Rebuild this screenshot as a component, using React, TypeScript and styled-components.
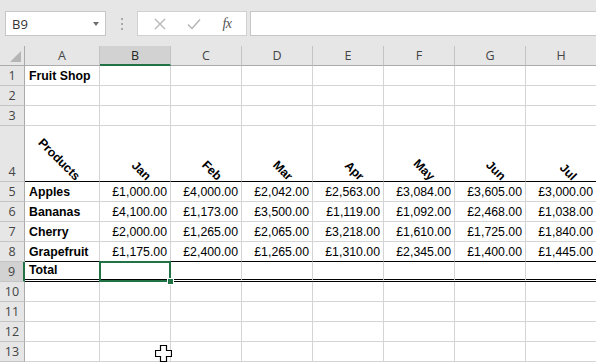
import styled, { createGlobalStyle } from "styled-components";

const GlobalStyle = createGlobalStyle`
  html, body {
    margin: 0;
    padding: 0;
    background: #ffffff;
    overflow: hidden;
  }
`;

const GREEN = "#217346";
const GRID = "#d4d4d4";

const Window = styled.div`
  width: 596px;
  height: 362px;
  overflow: hidden;
  position: relative;
  display: flex;
  flex-direction: column;
  background: #e6e6e6;
  font-family: "Liberation Sans", Arial, sans-serif;
`;

const FormulaBar = styled.div`
  height: 46px;
  box-sizing: border-box;
  padding: 11px 0 0 5px;
  display: flex;
  align-items: flex-start;
  background: #e6e6e6;
`;

const NameBox = styled.div`
  width: 101px;
  height: 25px;
  box-sizing: border-box;
  background: #ffffff;
  border: 1px solid #c6c6c6;
  display: flex;
  align-items: center;
  justify-content: space-between;
  padding: 0 6px 0 6px;
  font-family: "Open Sans", "Noto Sans", sans-serif;
  font-size: 13px;
  color: #333;
`;

const Dropdown = styled.span`
  width: 0;
  height: 0;
  border-left: 3.5px solid transparent;
  border-right: 3.5px solid transparent;
  border-top: 4px solid #6d6d6d;
`;

const Grip = styled.div`
  width: 31px;
  height: 25px;
  display: flex;
  flex-direction: column;
  align-items: center;
  justify-content: center;
  gap: 3px;
  span {
    width: 2px;
    height: 2px;
    background: #a8a8a8;
  }
`;

const ButtonBox = styled.div`
  width: 110px;
  height: 25px;
  box-sizing: border-box;
  background: #ffffff;
  border: 1px solid #d0d0d0;
  display: flex;
  align-items: center;
  justify-content: space-around;
  padding: 0 4px 0 6px;
`;

const Fx = styled.span`
  font-family: "Liberation Serif", "Times New Roman", serif;
  font-style: italic;
  font-size: 14px;
  color: #555;
  letter-spacing: -0.5px;
`;

const FormulaInput = styled.div`
  flex: 1;
  height: 25px;
  margin-left: 3px;
  box-sizing: border-box;
  background: #ffffff;
  border: 1px solid #c6c6c6;
  border-right: none;
`;

const Sheet = styled.div`
  flex: 1;
  display: grid;
  grid-template-columns: 25px 75px repeat(7, 71px);
  grid-template-rows: 20px 20px 20px 20px 56px repeat(9, 20px);
  background: #ffffff;
`;

const Corner = styled.div`
  background: #e6e6e6;
  border-right: 1px solid #ababab;
  border-bottom: 1px solid #ababab;
  box-sizing: border-box;
  display: flex;
  align-items: flex-end;
  justify-content: flex-end;
  padding: 0 3px 3px 0;
`;

const ColHead = styled.div<{ $active?: boolean }>`
  box-sizing: border-box;
  background: ${(p) => (p.$active ? "#d2d2d2" : "#e6e6e6")};
  border-right: 1px solid #c4c4c4;
  border-bottom: ${(p) => (p.$active ? `2px solid ${GREEN}` : "1px solid #ababab")};
  display: flex;
  align-items: center;
  justify-content: center;
  font-family: "Open Sans", "Noto Sans", sans-serif;
  font-size: 12.5px;
  color: ${(p) => (p.$active ? "#262626" : "#444")};
`;

const RowHead = styled.div<{ $active?: boolean }>`
  box-sizing: border-box;
  background: ${(p) => (p.$active ? "#d2d2d2" : "#e6e6e6")};
  border-right: ${(p) => (p.$active ? `2px solid ${GREEN}` : "1px solid #ababab")};
  border-bottom: 1px solid #c4c4c4;
  display: flex;
  align-items: flex-end;
  justify-content: center;
  padding-bottom: 1px;
  font-family: "Open Sans", "Noto Sans", sans-serif;
  font-size: 12.5px;
  line-height: 16px;
  color: #444;
`;

type Edge = "grid" | "black" | "double";

const bottomEdge = (e?: Edge) => {
  if (e === "black") return "1px solid #000";
  if (e === "double") return "3px double #000";
  return `1px solid ${GRID}`;
};

const Cell = styled.div<{ $right?: boolean; $bold?: boolean; $edge?: Edge }>`
  box-sizing: border-box;
  position: relative;
  border-right: 1px solid ${GRID};
  border-bottom: ${(p) => bottomEdge(p.$edge)};
  display: flex;
  align-items: flex-end;
  justify-content: ${(p) => (p.$right ? "flex-end" : "flex-start")};
  padding: 0 3px 1px 4px;
  font-size: 12.3px;
  line-height: 15px;
  font-weight: ${(p) => (p.$bold ? 700 : 400)};
  color: #000;
  white-space: nowrap;
`;

const Selected = styled(Cell)`
  &::after {
    content: "";
    position: absolute;
    left: -1px;
    top: -1px;
    right: -1px;
    bottom: -3px;
    border: 2px solid ${GREEN};
    pointer-events: none;
  }
  &::before {
    content: "";
    position: absolute;
    right: -4px;
    bottom: -6px;
    width: 5px;
    height: 5px;
    background: ${GREEN};
    border: 1px solid #fff;
    z-index: 2;
  }
`;

const AngledCell = styled(Cell)`
  justify-content: flex-end;
  padding: 0 22px 3px 0;
`;

const Angled = styled.span`
  display: inline-block;
  font-weight: 700;
  transform: translate(-5px, 6px) rotate(45deg);
  transform-origin: right bottom;
`;

const Cursor = styled.svg`
  position: absolute;
  left: 155px;
  top: 345px;
`;

const months = ["Jan", "Feb", "Mar", "Apr", "May", "Jun", "Jul"];
const cols = ["A", "B", "C", "D", "E", "F", "G", "H"];

const products: [string, string[]][] = [
  ["Apples", ["£1,000.00", "£4,000.00", "£2,042.00", "£2,563.00", "£3,084.00", "£3,605.00", "£3,000.00"]],
  ["Bananas", ["£4,100.00", "£1,173.00", "£3,500.00", "£1,119.00", "£1,092.00", "£2,468.00", "£1,038.00"]],
  ["Cherry", ["£2,000.00", "£1,265.00", "£2,065.00", "£3,218.00", "£1,610.00", "£1,725.00", "£1,840.00"]],
  ["Grapefruit", ["£1,175.00", "£2,400.00", "£1,265.00", "£1,310.00", "£2,345.00", "£1,400.00", "£1,445.00"]],
];

const EmptyRow = ({ n }: { n: number }) => (
  <>
    <RowHead>{n}</RowHead>
    {cols.map((c) => (
      <Cell key={c} />
    ))}
  </>
);

export default function App() {
  return (
    <>
      <GlobalStyle />
      <Window>
        <FormulaBar>
          <NameBox>
            B9
            <Dropdown />
          </NameBox>
          <Grip>
            <span />
            <span />
            <span />
          </Grip>
          <ButtonBox>
            <svg width="12" height="12" viewBox="0 0 12 12">
              <path d="M1 1 L11 11 M11 1 L1 11" stroke="#b4b4b4" strokeWidth="1.2" />
            </svg>
            <svg width="14" height="12" viewBox="0 0 14 12">
              <path d="M1 6.5 L5 10.5 L13 1.5" stroke="#b4b4b4" strokeWidth="1.4" fill="none" />
            </svg>
            <Fx>fx</Fx>
          </ButtonBox>
          <FormulaInput />
        </FormulaBar>

        <Sheet>
          <Corner>
            <svg width="11" height="11" viewBox="0 0 11 11">
              <polygon points="11,0 11,11 0,11" fill="#b5b5b5" />
            </svg>
          </Corner>
          {cols.map((c) => (
            <ColHead key={c} $active={c === "B"}>
              {c}
            </ColHead>
          ))}

          <RowHead>1</RowHead>
          <Cell $bold>Fruit Shop</Cell>
          {cols.slice(1).map((c) => (
            <Cell key={c} />
          ))}

          <EmptyRow n={2} />
          <EmptyRow n={3} />

          <RowHead>4</RowHead>
          <AngledCell $edge="black">
            <Angled>Products</Angled>
          </AngledCell>
          {months.map((m) => (
            <AngledCell key={m} $edge="black">
              <Angled>{m}</Angled>
            </AngledCell>
          ))}

          {products.map(([name, values], i) => (
            <>
              <RowHead key={`h${name}`}>{5 + i}</RowHead>
              <Cell key={name} $bold $edge={i === 3 ? "black" : "grid"}>
                {name}
              </Cell>
              {values.map((v, j) => (
                <Cell key={`${name}${j}`} $right $edge={i === 3 ? "black" : "grid"}>
                  {v}
                </Cell>
              ))}
            </>
          ))}

          <RowHead $active>9</RowHead>
          <Cell $bold $edge="double">
            Total
          </Cell>
          <Selected $edge="double" />
          {cols.slice(2).map((c) => (
            <Cell key={c} $edge="double" />
          ))}

          <EmptyRow n={10} />
          <EmptyRow n={11} />
          <EmptyRow n={12} />
          <EmptyRow n={13} />
        </Sheet>

        <Cursor width="17" height="17" viewBox="0 0 17 17">
          <polygon
            points="5.5,0.5 11.5,0.5 11.5,5.5 16.5,5.5 16.5,11.5 11.5,11.5 11.5,16.5 5.5,16.5 5.5,11.5 0.5,11.5 0.5,5.5 5.5,5.5"
            fill="#fff"
            stroke="#000"
            strokeWidth="1.2"
          />
        </Cursor>
      </Window>
    </>
  );
}
